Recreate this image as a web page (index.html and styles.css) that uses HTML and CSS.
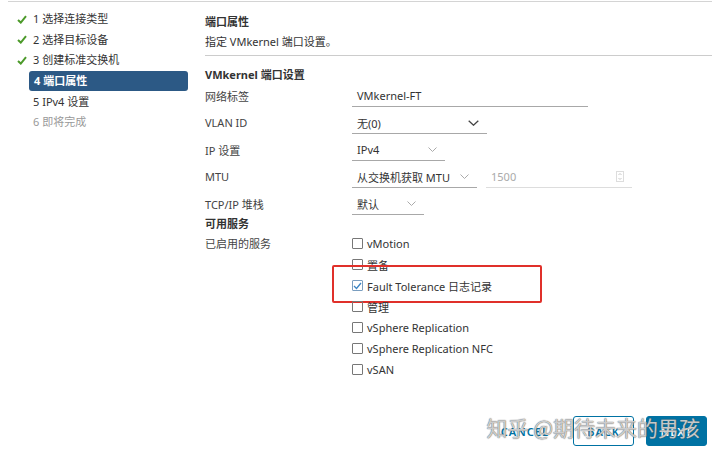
FILE: index.html
```html
<!DOCTYPE html>
<html lang="zh-CN">
<head>
  <meta charset="UTF-8">
  <title>添加网络</title>
  <link rel="stylesheet" href="styles.css">
</head>
<body>
  <div class="page">
    <div class="top-line"></div>
    <div class="wizard">
      <ul class="steps">
        <li class="done"><span class="icon"><svg width="10" height="9" viewBox="0 0 10 9"><path d="M1 5 L3.8 7.6 L9 1.2" fill="none" stroke="#4c9a2a" stroke-width="2"/></svg></span><span class="label">1 选择连接类型</span></li>
        <li class="done"><span class="icon"><svg width="10" height="9" viewBox="0 0 10 9"><path d="M1 5 L3.8 7.6 L9 1.2" fill="none" stroke="#4c9a2a" stroke-width="2"/></svg></span><span class="label">2 选择目标设备</span></li>
        <li class="done"><span class="icon"><svg width="10" height="9" viewBox="0 0 10 9"><path d="M1 5 L3.8 7.6 L9 1.2" fill="none" stroke="#4c9a2a" stroke-width="2"/></svg></span><span class="label">3 创建标准交换机</span></li>
        <li class="active"><span class="icon"></span><span class="label">4 端口属性</span></li>
        <li><span class="icon"></span><span class="label">5 IPv4 设置</span></li>
        <li class="disabled"><span class="icon"></span><span class="label">6 即将完成</span></li>
      </ul>

      <div class="content">
        <div class="title">端口属性</div>
        <div class="subtitle">指定 VMkernel 端口设置。</div>

        <div class="section">VMkernel 端口设置</div>
        <div class="form">
          <div class="row">
            <span class="row-label">网络标签</span>
            <span class="field field-text">VMkernel-FT</span>
          </div>
          <div class="row">
            <span class="row-label">VLAN ID</span>
            <span class="field select select-vlan">无(0)<svg class="chev dark" width="11" height="6" viewBox="0 0 11 6"><path d="M0.7 0.7 L5.5 5.2 L10.3 0.7" fill="none" stroke="#444" stroke-width="1.3"/></svg></span>
          </div>
          <div class="row">
            <span class="row-label">IP 设置</span>
            <span class="field select select-ip">IPv4<svg class="chev" width="9" height="5" viewBox="0 0 9 5"><path d="M0.5 0.5 L4.5 4.5 L8.5 0.5" fill="none" stroke="#aaa" stroke-width="1"/></svg></span>
          </div>
          <div class="row">
            <span class="row-label">MTU</span>
            <span class="field select select-mtu">从交换机获取 MTU<svg class="chev" width="9" height="5" viewBox="0 0 9 5"><path d="M0.5 0.5 L4.5 4.5 L8.5 0.5" fill="none" stroke="#aaa" stroke-width="1"/></svg></span>
            <span class="field number">1500<span class="spinner"><svg width="8" height="11" viewBox="0 0 8 11"><rect x="0.5" y="0.5" width="7" height="10" fill="#fff" stroke="#ddd"/><path d="M2.5 4 L4 2.5 L5.5 4 M2.5 7 L4 8.5 L5.5 7" fill="none" stroke="#bbb" stroke-width="0.8"/></svg></span></span>
          </div>
          <div class="row">
            <span class="row-label">TCP/IP 堆栈</span>
            <span class="field select select-stack">默认<svg class="chev" width="9" height="5" viewBox="0 0 9 5"><path d="M0.5 0.5 L4.5 4.5 L8.5 0.5" fill="none" stroke="#aaa" stroke-width="1"/></svg></span>
          </div>
        </div>

        <div class="section">可用服务</div>
        <div class="services">
          <span class="row-label">已启用的服务</span>
          <ul class="checks">
            <li><span class="box"></span>vMotion</li>
            <li><span class="box"></span>置备</li>
            <li class="marked"><span class="box checked"><svg width="9" height="8" viewBox="0 0 9 8"><path d="M1 4 L3.5 6.5 L8 1" fill="none" stroke="#3b84c4" stroke-width="1.3"/></svg></span>Fault Tolerance 日志记录</li>
            <li><span class="box"></span>管理</li>
            <li><span class="box"></span>vSphere Replication</li>
            <li><span class="box"></span>vSphere Replication NFC</li>
            <li><span class="box"></span>vSAN</li>
          </ul>
        </div>
      </div>
    </div>

    <div class="footer">
      <button class="btn btn-link">CANCEL</button>
      <button class="btn btn-outline">BACK</button>
      <button class="btn btn-primary">NEXT</button>
    </div>
    <div class="watermark">知乎 @期待未来的男孩</div>
  </div>
</body>
</html>
```

FILE: styles.css
```css
body {
  margin: 0;
  padding: 0;
  background: #fff;
  font-family: "Noto Sans", "Noto Sans CJK SC", sans-serif;
  font-size: 11px;
  color: #444;
}

.page {
  position: relative;
  width: 720px;
  height: 454px;
  display: flex;
  flex-direction: column;
  overflow: hidden;
}

.top-line {
  margin: 1px 8px 0;
  border-top: 1px solid #d4d4d4;
}

.wizard {
  display: flex;
}

/* 左側步驟 */
.steps {
  list-style: none;
  margin: 0;
  padding: 7px 17px 0 17px;
  width: 171px;
  flex-shrink: 0;
}

.steps li {
  display: flex;
  align-items: center;
  height: 20.6px;
  color: #333;
}

.steps .icon {
  width: 12px;
  display: flex;
  align-items: center;
}

.steps .label {
  flex: 1;
  padding-left: 4px;
  line-height: 20px;
  border-radius: 3px;
}

.steps li.active .label {
  background: #2c5985;
  color: #fff;
  font-weight: bold;
  padding-left: 5px;
}

.steps li.disabled {
  color: #999;
}

/* 右側內容 */
.content {
  flex: 1;
  padding: 10px 8px 0 0;
}

.title {
  line-height: 20px;
  color: #333;
  font-weight: 600;
}

.subtitle {
  line-height: 20px;
  color: #333;
  padding-bottom: 3px;
  border-bottom: 1px solid #ccc;
}

.section {
  line-height: 14px;
  margin-top: 12px;
  color: #333;
  font-weight: bold;
}

.form + .section {
  margin-top: 0;
}

.section + .services {
  margin-top: 2px;
}

.row {
  display: flex;
  align-items: center;
  height: 27px;
}

.row-label {
  width: 147px;
  flex-shrink: 0;
  color: #444;
}

.field {
  display: flex;
  align-items: center;
  height: 20px;
  padding: 0 5px;
  border-bottom: 1px solid #a8a8a8;
  color: #333;
  position: relative;
  top: 0.5px;
}

.field-text { width: 226px; }
.select { justify-content: space-between; padding-right: 8px; }
.select-vlan { width: 122px; }
.select-ip { width: 80px; }
.select-mtu { width: 112px; }
.select-stack { width: 59px; }

.number {
  width: 136px;
  margin-left: 9px;
  color: #aaa;
  border-bottom-color: #ddd;
  justify-content: space-between;
}

.spinner {
  display: flex;
  margin-right: 3px;
}

/* 服務勾選 */
.services {
  display: flex;
  align-items: flex-start;
}

.services .row-label {
  line-height: 21px;
}

.checks {
  list-style: none;
  margin: 0;
  padding: 0;
}

.checks li {
  display: flex;
  align-items: center;
  height: 21px;
  color: #333;
  position: relative;
}

.box {
  width: 9px;
  height: 9px;
  border: 1px solid #777;
  border-radius: 1px;
  margin-right: 4px;
  display: flex;
  align-items: center;
  justify-content: center;
}

.box.checked {
  border-color: #7a9ec0;
}

.checks li.marked::after {
  content: "";
  position: absolute;
  left: -20px;
  top: -10px;
  width: 206px;
  height: 34px;
  border: 2px solid #e0302a;
  border-radius: 2px;
}

/* 底部按鈕 */
.footer {
  margin-top: auto;
  display: flex;
  justify-content: flex-end;
  gap: 12px;
  padding: 0 13px 8px 0;
}

.btn {
  height: 30px;
  font-family: "Noto Sans", sans-serif;
  font-size: 11px;
  font-weight: 600;
  letter-spacing: 1px;
  border-radius: 3px;
  padding: 0 12px;
  cursor: pointer;
}

.btn-link {
  background: none;
  border: none;
  color: #0072a3;
}

.btn-outline {
  width: 61px;
  background: #fff;
  border: 1px solid #0072a3;
  color: #0072a3;
}

.btn-primary {
  width: 61px;
  background: #0072a3;
  border: 1px solid #0072a3;
  color: #fff;
}

/* 浮水印 */
.watermark {
  position: absolute;
  right: 20px;
  bottom: 12px;
  font-size: 21px;
  color: rgba(255, 255, 255, 0.7);
  text-shadow: 0 0 1px rgba(80, 80, 80, 0.8), 0 0 1px rgba(80, 80, 80, 0.8);
  font-family: "Noto Sans CJK SC", sans-serif;
}
```
